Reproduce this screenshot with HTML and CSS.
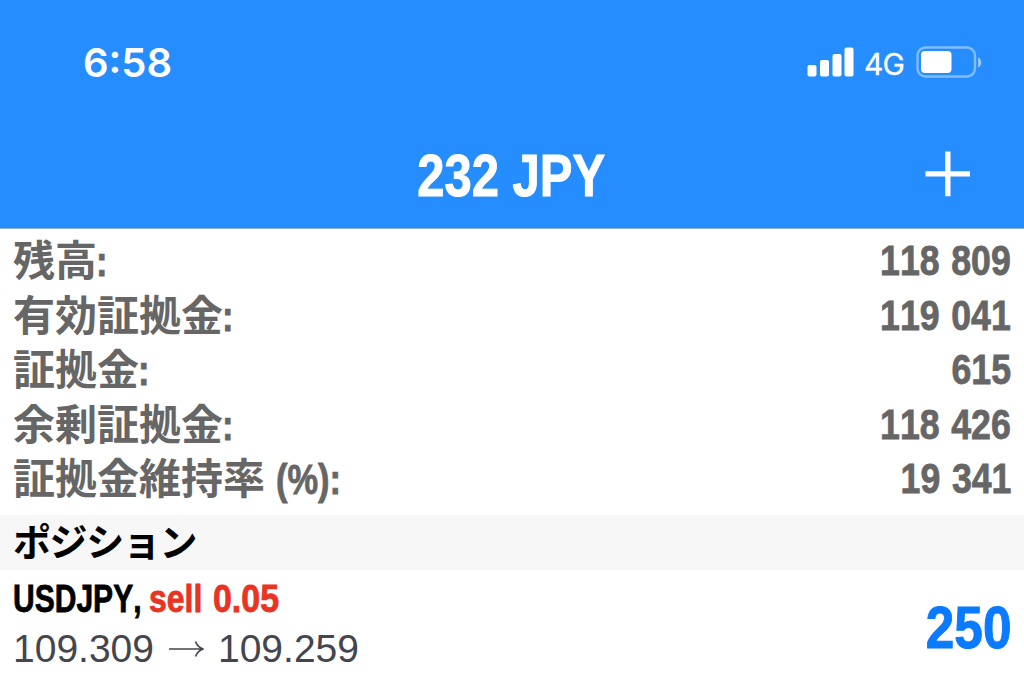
FILE: index.html
```html
<!DOCTYPE html>
<html lang="ja">
<head>
<meta charset="utf-8">
<title>232 JPY</title>
<link rel="stylesheet" href="styles.css">
</head>
<body>
<header class="top">
  <div class="status">
    <span class="clock">6:58</span>
    <div class="indicators">
      <svg class="signal" width="48" height="30" viewBox="0 0 48 30" fill="#fff">
        <rect x="0.5" y="18" width="9" height="11.5" rx="2"/>
        <rect x="13" y="13" width="9" height="16.5" rx="2"/>
        <rect x="25.5" y="7" width="9" height="22.5" rx="2"/>
        <rect x="37.5" y="0.5" width="9" height="29" rx="2"/>
      </svg>
      <span class="network">4G</span>
      <svg class="battery" width="66" height="32" viewBox="0 0 66 32">
        <rect x="1.5" y="1.5" width="57.5" height="29" rx="8" fill="none" stroke="#fff" stroke-opacity=".42" stroke-width="2.4"/>
        <rect x="5" y="5" width="30.5" height="22" rx="4" fill="#fff"/>
        <path d="M62 11.5C66.5 13 66.5 20 62 21.5Z" fill="#fff" fill-opacity=".5"/>
      </svg>
    </div>
  </div>
  <div class="nav">
    <h1 class="title">232 JPY</h1>
    <svg class="add" width="46" height="46" viewBox="0 0 46 46" fill="#fff"><path d="M20.200 .5h5.300v19.800H45v5.300H25.500V45.300H20.200V25.600H.5V20.300H20.200Z"/></svg>
  </div>
</header>
<main>
  <dl class="summary">
    <div class="row"><dt>残高<span class="colon">:</span></dt><dd>118 809</dd></div>
    <div class="row"><dt>有効証拠金<span class="colon">:</span></dt><dd>119 041</dd></div>
    <div class="row"><dt>証拠金<span class="colon">:</span></dt><dd>615</dd></div>
    <div class="row"><dt>余剰証拠金<span class="colon">:</span></dt><dd>118 426</dd></div>
    <div class="row"><dt>証拠金維持率<span class="percent">(%):</span></dt><dd>19 341</dd></div>
  </dl>
  <h2 class="section">ポジション</h2>
  <section class="position">
    <div class="details">
      <div class="order"><span class="symbol">USDJPY,</span><span class="side">sell</span><span class="volume">0.05</span></div>
      <div class="prices"><span>109.309</span>
        <svg class="arrow" width="36" height="18" viewBox="0 0 36 18" fill="none" stroke="#45454d" stroke-width="1.7"><path d="M0 9H34M26.500 1.500C28 5.500 30.500 8 34.500 9C30.500 10 28 12.500 26.500 16.500"/></svg>
        <span>109.259</span></div>
    </div>
    <div class="profit">250</div>
  </section>
</main>
</body>
</html>
```
FILE: styles.css
```css
* { box-sizing: border-box; }
body, h1, h2, dl, dt, dd { margin: 0; }
body {
  width: 1024px;
  height: 681px;
  overflow: hidden;
  background: #fff;
  font-family: "Liberation Sans", "Noto Sans CJK JP", sans-serif;
  font-kerning: none;
}
.top {
  height: 229px;
  background: #268dff;
  border-bottom: 1px solid #8faed6;
  color: #fff;
}
.status {
  display: flex;
  justify-content: space-between;
  height: 120px;
  padding: 37px 42px 0 83px;
}
.clock {
  font: 600 40px/52px Inter, sans-serif;
}
.indicators { display: flex; align-items: center; height: 50px; }
.network {
  width: 42px;
  margin: 3px 0 0 9px;
  font: 400 30px/40px Inter, sans-serif;
  letter-spacing: -.8px;
  -webkit-text-stroke: .3px;
}
.battery { margin-left: 10px; }
.nav {
  display: grid;
  grid-template-columns: 1fr auto 1fr;
  align-items: center;
  height: 107px;
  padding-right: 53px;
  padding-left: 51px;
}
.title {
  grid-column: 2;
  padding-top: 5px;
  font-size: 59px;
  line-height: 102px;
  white-space: nowrap;
  -webkit-text-stroke: 1px;
  transform: scaleX(.83);
}
.add { justify-self: end; }
.summary { height: 286px; padding: 4px 13px 0; color: #666; }
.row {
  display: flex;
  justify-content: space-between;
  height: 54.5px;
  font-weight: 700;
  line-height: 54.5px;
}
dt {
  display: flex;
  font-family: "Noto Sans CJK JP", sans-serif;
  font-size: 42px;
  line-height: 50.5px;
}
dd {
  padding-top: 1px;
  font-size: 42px;
  word-spacing: 2px;
  white-space: nowrap;
  -webkit-text-stroke: .8px;
  transform: scaleX(.85);
  transform-origin: right;
}
.colon, .percent {
  padding-top: 2px;
  font-family: "Liberation Sans", sans-serif;
  line-height: 54.5px;
  -webkit-text-stroke: .8px;
  transform: scaleX(.82);
  transform-origin: left;
}
.colon { margin-left: -1px; }
.percent { margin-left: 11px; }
.section {
  height: 55px;
  padding-left: 13px;
  background: #f7f7f7;
  font: 700 38px/50px "Noto Sans CJK JP", sans-serif;
  letter-spacing: -1.4px;
}
.position {
  display: flex;
  justify-content: space-between;
  height: 111px;
  padding: 4px 13px 0;
}
.order {
  display: flex;
  height: 50px;
  font-size: 39px;
  font-weight: 700;
  line-height: 50px;
  -webkit-text-stroke: .8px;
}
.order span { transform-origin: left; white-space: nowrap; }
.symbol { width: 136px; transform: scaleX(.77); }
.side { width: 64px; color: #e93323; transform: scaleX(.82); }
.volume { width: 68px; color: #e93323; transform: scaleX(.87); }
.prices {
  display: flex;
  align-items: center;
  height: 50px;
  color: #45454d;
  font-size: 39px;
  line-height: 50px;
}
.arrow { margin: 0 13px 0 15px; }
.profit {
  color: #0a7aff;
  font-size: 59px;
  font-weight: 700;
  line-height: 108px;
  -webkit-text-stroke: 1px;
  transform: scaleX(.87);
  transform-origin: right;
}
```
